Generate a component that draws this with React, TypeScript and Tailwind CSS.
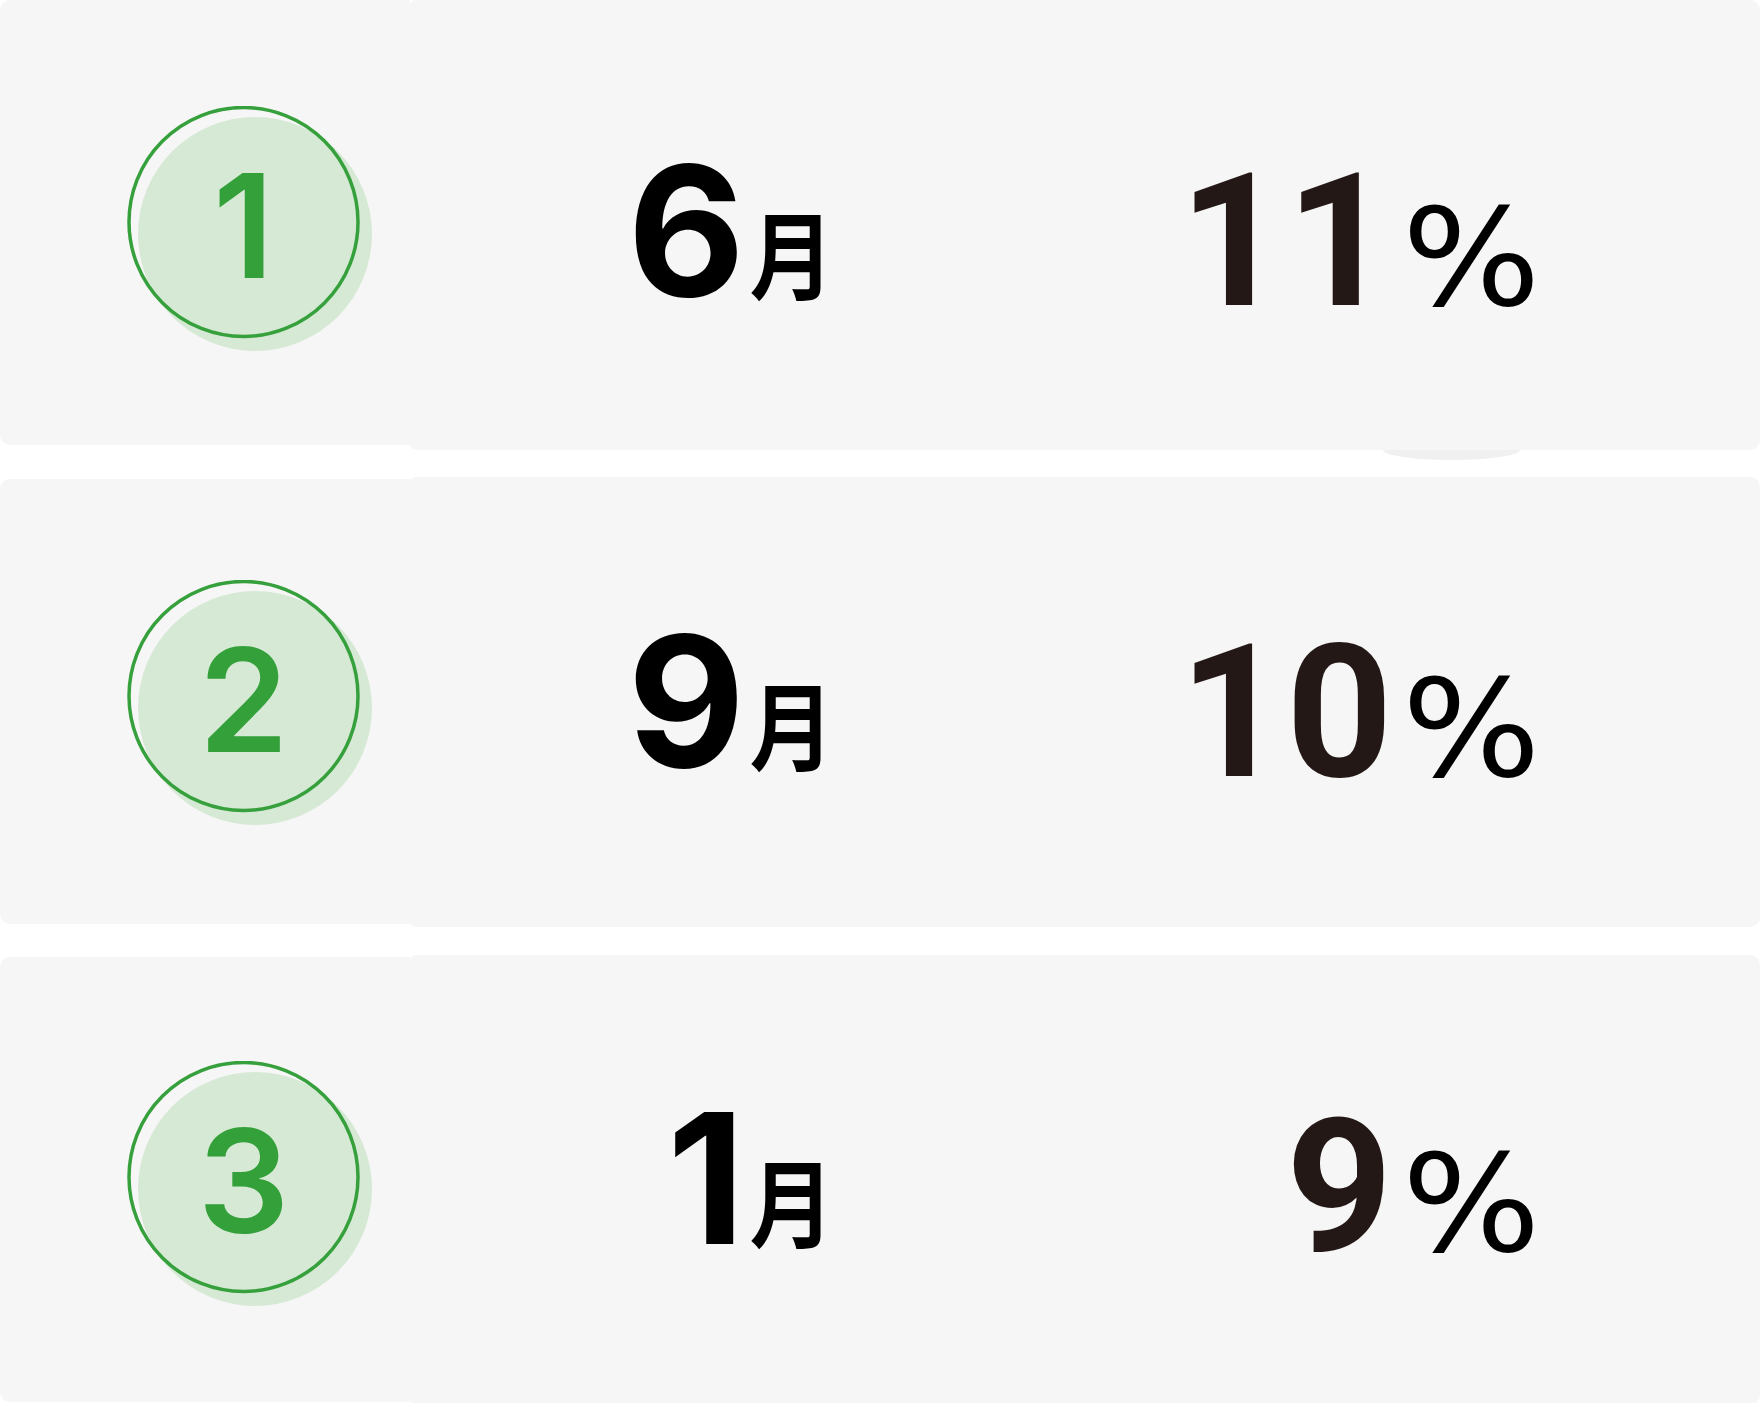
import React from "react";

function Badge({ num }: { num: string }) {
  return (
    <div className="grid w-[246px] h-[246px]">
      <svg
        className="col-start-1 row-start-1"
        width="246"
        height="246"
        viewBox="0 0 246 246"
      >
        <ellipse cx="128" cy="128" rx="117" ry="117" fill="#d6e9d5" />
        <circle cx="116.5" cy="116" r="114.5" fill="none" stroke="#36a03c" strokeWidth="3.5" />
      </svg>
      <div className="col-start-1 row-start-1 w-[233px] h-[233px] flex items-center justify-center">
        <span className="text-[#33a03a] text-[144px] leading-none font-semibold pt-[6px] font-['Inter',sans-serif]">
          {num}
        </span>
      </div>
    </div>
  );
}

function Card({
  num,
  month,
  pct,
  leftMt,
  circleTopCls,
  monthPtCls,
  pctPtCls,
}: {
  num: string;
  month: string;
  pct: string;
  leftMt: string;
  circleTopCls: string;
  monthPtCls: string;
  pctPtCls: string;
}) {
  return (
    <div className="flex items-start w-[1760px] shrink-0">
      <div className={`w-[410px] h-[445px] bg-[#f6f6f6] rounded-l-[10px] pl-[127px] ${leftMt} ${circleTopCls}`}>
        <Badge num={num} />
      </div>
      <div className="flex-1 h-[450px] bg-[#f6f6f6] rounded-r-[10px] rounded-l-[6px] flex items-start">
        <div className={`w-[424px] flex justify-end items-baseline ${monthPtCls}`}>
          <span className="text-black text-[181px] leading-none font-bold font-['Inter',sans-serif]">
            {month}
          </span>
          <span className="inline-block text-black text-[96px] leading-none font-bold ml-[-7px] scale-x-[0.88] -translate-y-[4px] origin-right font-['Noto_Sans_CJK_JP','Noto_Sans_CJK_SC',sans-serif]">
            月
          </span>
        </div>
        <div className={`w-[696px] flex justify-end items-baseline ${pctPtCls}`}>
          <span className="text-[#231815] text-[186px] leading-none font-bold font-['Roboto',sans-serif]">
            {pct}
          </span>
          <span className="inline-block text-black text-[135px] leading-none font-normal ml-[9px] scale-x-[1.08] origin-left font-['DejaVu_Sans',sans-serif]">
            %
          </span>
        </div>
      </div>
    </div>
  );
}

export default function App() {
  return (
    <div className="w-[1760px] h-[1403px] bg-white flex flex-col overflow-hidden">
      <Card
        num="1"
        month="6"
        pct="11"
        leftMt="mt-0"
        circleTopCls="pt-[106px]"
        monthPtCls="pt-[140px]"
        pctPtCls="pt-[148px]"
      />
      <div className="h-[27px] shrink-0 flex items-start">
        <div className="ml-[1383px] w-[137px] h-[10px] bg-[#f0f0f0] rounded-bl-[50%_100%] rounded-br-[50%_100%]" />
      </div>
      <Card
        num="2"
        month="9"
        pct="10"
        leftMt="mt-[2px]"
        circleTopCls="pt-[101px]"
        monthPtCls="pt-[134px]"
        pctPtCls="pt-[142px]"
      />
      <div className="h-[28px] shrink-0" />
      <Card
        num="3"
        month="1"
        pct="9"
        leftMt="mt-[2px]"
        circleTopCls="pt-[104px]"
        monthPtCls="pt-[133px]"
        pctPtCls="pt-[139px]"
      />
    </div>
  );
}
